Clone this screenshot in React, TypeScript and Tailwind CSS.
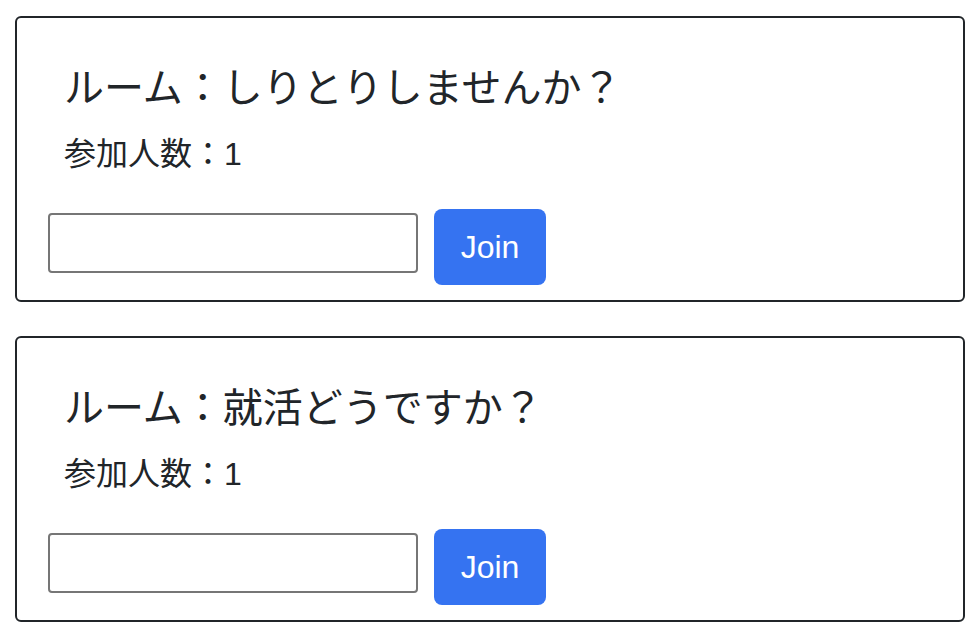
const rooms = [
  { id: 1, name: 'しりとりしませんか？', members: 1 },
  { id: 2, name: '就活どうですか？', members: 1 },
];

const font = "font-['Liberation_Sans','Noto_Sans_CJK_JP',sans-serif]";

function RoomCard({ name, members }: { name: string; members: number }) {
  return (
    <div className="h-[286px] rounded-[6px] border-2 border-[#212529] pt-[46px] pl-[31px] pr-[31px] pb-[15px]">
      <div className="pl-[16px]">
        <h5 className="text-[40px] leading-[48px] text-[#212529]">ルーム：{name}</h5>
        <p className="mt-[18px] text-[32px] leading-[48px] text-[#212529]">参加人数：{members}</p>
      </div>
      <div className="mt-[31px] flex items-start gap-[16px]">
        <input
          type="text"
          className="mt-[4px] h-[60px] w-[370px] rounded-[4px] border-2 border-[#767676] bg-white px-2 text-[28px] outline-none"
        />
        <button
          type="button"
          className="h-[76px] w-[112px] rounded-[8px] bg-[#3573f1] text-[32px] leading-[48px] text-white"
        >
          Join
        </button>
      </div>
    </div>
  );
}

export default function App() {
  return (
    <div className={`${font} min-h-[640px] bg-white px-[15px] pt-[16px]`}>
      <div className="flex flex-col gap-[34px]">
        {rooms.map((r) => (
          <RoomCard key={r.id} name={r.name} members={r.members} />
        ))}
      </div>
    </div>
  );
}
